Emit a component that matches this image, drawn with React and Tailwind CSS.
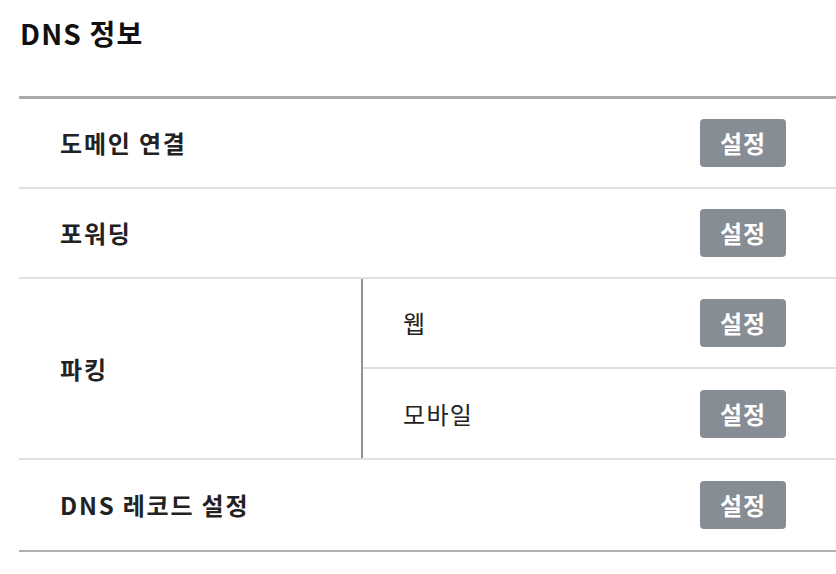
export default function App() {
  const font = { fontFamily: '"Noto Sans CJK KR", "Noto Sans", sans-serif' };
  const Btn = () => (
    <button className="w-[86px] h-[48px] rounded-[4px] bg-[#878d94] text-white font-bold text-[24px] tracking-[1px] leading-none mr-[50px] shrink-0">
      설정
    </button>
  );
  const Row = ({ label, last }) => (
    <div className={`flex items-center justify-between h-[90px] ${last ? "" : "border-b-2 border-[#e0e0e0]"}`}>
      <span className="pl-[41px] font-bold text-[24px] tracking-[1.8px] text-[#222]">{label}</span>
      <Btn />
    </div>
  );
  return (
    <div className="w-[836px] h-[574px] bg-white pl-[19px]" style={font}>
      <h2 className="pt-[13px] pl-[1px] h-[96px] font-bold text-[28px] tracking-[1.2px] text-[#111] leading-[40px]">DNS 정보</h2>
      <div className="border-t-[3px] border-t-[#aaaaaa] border-b-2 border-b-[#b0b0b0]">
        <Row label="도메인 연결" />
        <Row label="포워딩" />
        <div className="flex border-b-2 border-[#e0e0e0]">
          <div className="w-[344px] shrink-0 flex items-center border-r-2 border-[#8a939c]">
            <span className="pl-[41px] font-bold text-[24px] tracking-[1.8px] text-[#222]">파킹</span>
          </div>
          <div className="flex-1 flex flex-col">
            <div className="flex items-center justify-between h-[90px] border-b-2 border-[#e0e0e0]">
              <span className="pl-[40px] text-[24px] tracking-[1.3px] text-[#222]">웹</span>
              <Btn />
            </div>
            <div className="flex items-center justify-between h-[89px]">
              <span className="pl-[40px] text-[24px] tracking-[1.3px] text-[#222]">모바일</span>
              <Btn />
            </div>
          </div>
        </div>
        <Row label="DNS 레코드 설정" last />
      </div>
    </div>
  );
}
